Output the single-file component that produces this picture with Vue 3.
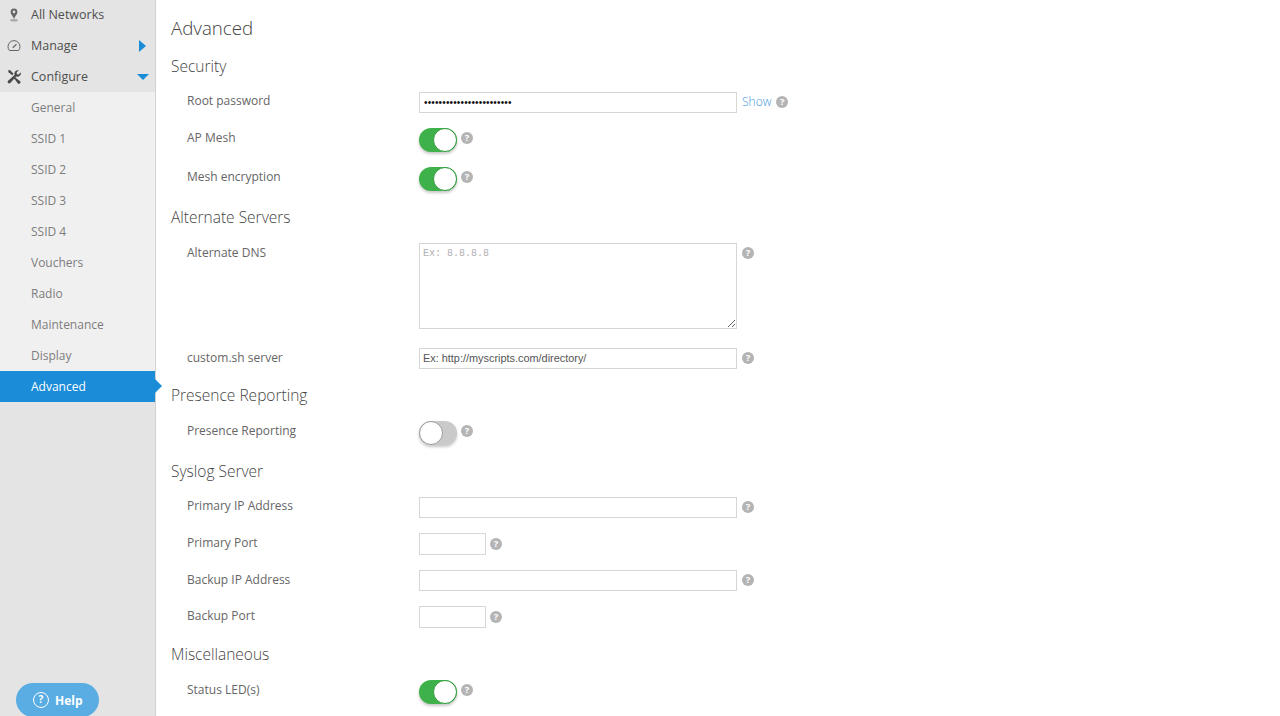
<script setup>
const topItems = [
  { label: 'All Networks', icon: 'pin' },
  { label: 'Manage', icon: 'gauge', arrow: 'right' },
  { label: 'Configure', icon: 'tools', arrow: 'down' }
]
const subItems = ['General', 'SSID 1', 'SSID 2', 'SSID 3', 'SSID 4', 'Vouchers', 'Radio', 'Maintenance', 'Display']
const sections = [
  { title: 'Security', rows: [
    { label: 'Root password', type: 'password', value: '••••••••••••••••••••••••', show: true, tight: true },
    { label: 'AP Mesh', type: 'toggle', on: true },
    { label: 'Mesh encryption', type: 'toggle', on: true }
  ] },
  { title: 'Alternate Servers', rows: [
    { label: 'Alternate DNS', type: 'area' },
    { label: 'custom.sh server', type: 'text', value: 'Ex: http://myscripts.com/directory/' }
  ] },
  { title: 'Presence Reporting', rows: [
    { label: 'Presence Reporting', type: 'toggle', on: false }
  ] },
  { title: 'Syslog Server', rows: [
    { label: 'Primary IP Address', type: 'text', value: '', tight: true },
    { label: 'Primary Port', type: 'port', value: '' },
    { label: 'Backup IP Address', type: 'text', value: '' },
    { label: 'Backup Port', type: 'port', value: '' }
  ] },
  { title: 'Miscellaneous', rows: [
    { label: 'Status LED(s)', type: 'toggle', on: true }
  ] }
]
</script>

<template>
  <div class="page">
    <aside class="sidebar">
      <nav class="nav">
        <a v-for="item in topItems" :key="item.label" class="top-item">
          <svg v-if="item.icon === 'pin'" class="nav-icon" viewBox="0 0 16 16">
            <path d="M8 1.500a3.400 3.400 0 0 0-3.400 3.400c0 2.300 2.400 4 3.400 7.100c1-3.100 3.400-4.800 3.400-7.100A3.400 3.400 0 0 0 8 1.500z" fill="#666" />
            <circle cx="8" cy="4.900" r="1.300" fill="#e4e4e4" />
            <ellipse cx="8" cy="13.300" rx="4" ry="1.300" fill="#aaa" />
          </svg>
          <svg v-else-if="item.icon === 'gauge'" class="nav-icon" viewBox="0 0 16 16" fill="none" stroke="#666">
            <path d="M3.400 12.500a6 6 0 1 1 9.200 0z" stroke-width="1" />
            <path d="M6.800 9.800L10.500 6.300" stroke-width="1.200" />
          </svg>
          <svg v-else class="nav-icon" viewBox="0 0 16 16" fill="#4a4a4a">
            <path d="M2 1.500L4 1l3.500 3.800-1.300 1.400L2.600 3.200z" />
            <path d="M7.200 8.800l1.500 1.500 3.200 4.200c.5.500 1.300.5 1.800 0l.5-.5c.5-.5.500-1.300 0-1.800L10 9l-1.400-1.600z" />
            <path d="M14.800 3.200a3.600 3.600 0 0 1-4.600 4.400L4.300 14c-.6.600-1.600.6-2.200 0s-.6-1.600 0-2.200l6.400-5.900a3.600 3.600 0 0 1 4.400-4.600L10.600 3.600l.4 1.600 1.600.4z" />
          </svg>
          <span>{{ item.label }}</span>
          <i v-if="item.arrow" :class="['arrow', item.arrow]"></i>
        </a>
      </nav>
      <div class="sub">
        <a v-for="s in subItems" :key="s" class="sub-item">{{ s }}</a>
        <a class="sub-item active">Advanced</a>
      </div>
      <button class="help"><span class="help-q">?</span>Help</button>
    </aside>

    <main class="main">
      <h1 class="title">Advanced</h1>
      <section v-for="sec in sections" :key="sec.title">
        <h2 class="heading">{{ sec.title }}</h2>
        <div v-for="row in sec.rows" :key="row.label" :class="['row', 'row-' + row.type, { tight: row.tight }]">
          <label class="label">{{ row.label }}</label>
          <input v-if="row.type === 'password'" class="field wide pass" type="text" :value="row.value" />
          <input v-else-if="row.type === 'text'" class="field wide" type="text" :value="row.value" />
          <input v-else-if="row.type === 'port'" class="field short" type="text" />
          <textarea v-else-if="row.type === 'area'" class="area" placeholder="Ex: 8.8.8.8"></textarea>
          <span v-else :class="['toggle', { on: row.on }]"><i class="knob"></i></span>
          <a v-if="row.show" class="show">Show</a>
          <span class="q">?</span>
        </div>
      </section>
    </main>
  </div>
</template>

<style>
html, body { margin: 0; padding: 0; background: #fff; overflow: hidden; }
</style>

<style scoped>
.page {
  display: flex;
  width: 1280px;
  height: 716px;
  overflow: hidden;
  font-family: "Open Sans", "Noto Sans", sans-serif;
  background: #fff;
}
.sidebar {
  position: relative;
  flex: none;
  width: 155px;
  height: 716px;
  background: #e4e4e4;
  border-right: 1px solid #d2d2d2;
}
.nav { margin-top: -1px; }
.top-item {
  box-sizing: border-box;
  display: flex;
  align-items: center;
  height: 31px;
  color: #4e4e4e;
  font-size: 12.500px;
}
.nav-icon {
  flex: none;
  width: 16px;
  height: 16px;
  margin: 0 9px 0 6px;
}
.arrow {
  margin-left: auto;
  width: 0;
  height: 0;
  border-style: solid;
  border-color: transparent;
}
.arrow.right {
  margin-right: 9px;
  border-width: 6.500px 0 6.500px 7px;
  border-left-color: #1a8cd8;
}
.arrow.down {
  margin-right: 6px;
  border-width: 6px 6.500px 0 6.500px;
  border-top-color: #1a8cd8;
}
.sub { background: #f0f0f0; }
.sub-item {
  box-sizing: border-box;
  display: flex;
  align-items: center;
  height: 31px;
  padding: 0 0 0 31px;
  color: #7d7d7d;
  font-size: 12px;
}
.sub-item.active {
  position: relative;
  background: #1a8cd8;
  color: #fff;
}
.sub-item.active::after {
  content: "";
  position: absolute;
  left: 100%;
  top: 8px;
  width: 0;
  height: 0;
  border-style: solid;
  border-color: transparent;
  border-width: 7.500px 0 7.500px 7px;
  border-left-color: #1a8cd8;
}
.help {
  position: absolute;
  left: 16px;
  top: 683px;
  display: flex;
  align-items: center;
  width: 83px;
  height: 34px;
  padding: 0 0 0 17px;
  border: 0;
  border-radius: 17px;
  background: #5aade2;
  color: #fff;
  font-family: "Open Sans", sans-serif;
  font-size: 12px;
  font-weight: 700;
}
.help-q {
  box-sizing: border-box;
  width: 16px;
  height: 16px;
  margin-right: 6px;
  border: 1.500px solid #fff;
  border-radius: 50%;
  font-size: 10px;
  line-height: 13px;
  text-align: center;
}
.main {
  flex: 1;
  padding: 13px 0 0 15px;
  min-width: 0;
}
.title {
  margin: 0 0 12px;
  height: 30px;
  font-size: 18.700px;
  font-weight: 300;
  line-height: 30px;
  color: #444;
}
.heading {
  margin: 0 0 13px;
  height: 24px;
  font-size: 15.500px;
  font-weight: 300;
  line-height: 23px;
  color: #444;
}
.row {
  display: flex;
  align-items: flex-start;
  margin: 0 0 15px 16px;
}
.row-area { margin-bottom: 19px; }
.label {
  flex: none;
  width: 232px;
  font-size: 12px;
  line-height: 20px;
  color: #666;
}
.tight .label { margin-top: -1px; }
.field {
  box-sizing: border-box;
  display: block;
  height: 21px;
  margin: 0;
  padding: 0 3px 2px;
  border: 1px solid #d6d6d6;
  outline: 0;
  border-radius: 0;
  background: #fff;
  font-family: "Liberation Sans", Arial, sans-serif;
  font-size: 10.900px;
  color: #555;
}
.wide { width: 318px; }
.short { width: 67px; height: 22px; }
.pass { padding: 0 4px; color: #111; font-size: 10px; letter-spacing: .15px; }
.area {
  box-sizing: border-box;
  display: block;
  width: 318px;
  height: 86px;
  margin: 0;
  padding: 4px 3px;
  border: 1px solid #d6d6d6;
  outline: 0;
  border-radius: 0;
  font-family: "Liberation Mono", monospace;
  font-size: 10px;
  color: #444;
}
.area::placeholder { color: #b0b0b0; opacity: 1; }
.toggle {
  position: relative;
  flex: none;
  width: 38px;
  height: 24px;
  border-radius: 12px;
  background: #cacaca;
  box-shadow: 0 2px 3px rgba(0, 0, 0, .22);
}
.toggle.on { background: #3fb14b; }
.knob {
  position: absolute;
  left: 0;
  top: 0;
  box-sizing: border-box;
  width: 24px;
  height: 24px;
  border: 1px solid #9a9a9a;
  border-radius: 50%;
  background: #fff;
}
.toggle.on .knob {
  left: 14px;
  border-color: #2f9a3b;
}
.show {
  margin: 1px 0 0 5px;
  font-size: 12px;
  line-height: 17px;
  font-weight: 300;
  color: #3f97de;
}
.q {
  flex: none;
  width: 12px;
  height: 12px;
  margin: 4px 0 0 5px;
  border-radius: 50%;
  background: #b4b4b4;
  color: #fff;
  font-size: 9.500px;
  font-weight: 700;
  line-height: 12px;
  text-align: center;
}
.row > .toggle + .q { margin-left: 4px; }
.row > .short + .q { margin: 5px 0 0 4px; }
</style>
